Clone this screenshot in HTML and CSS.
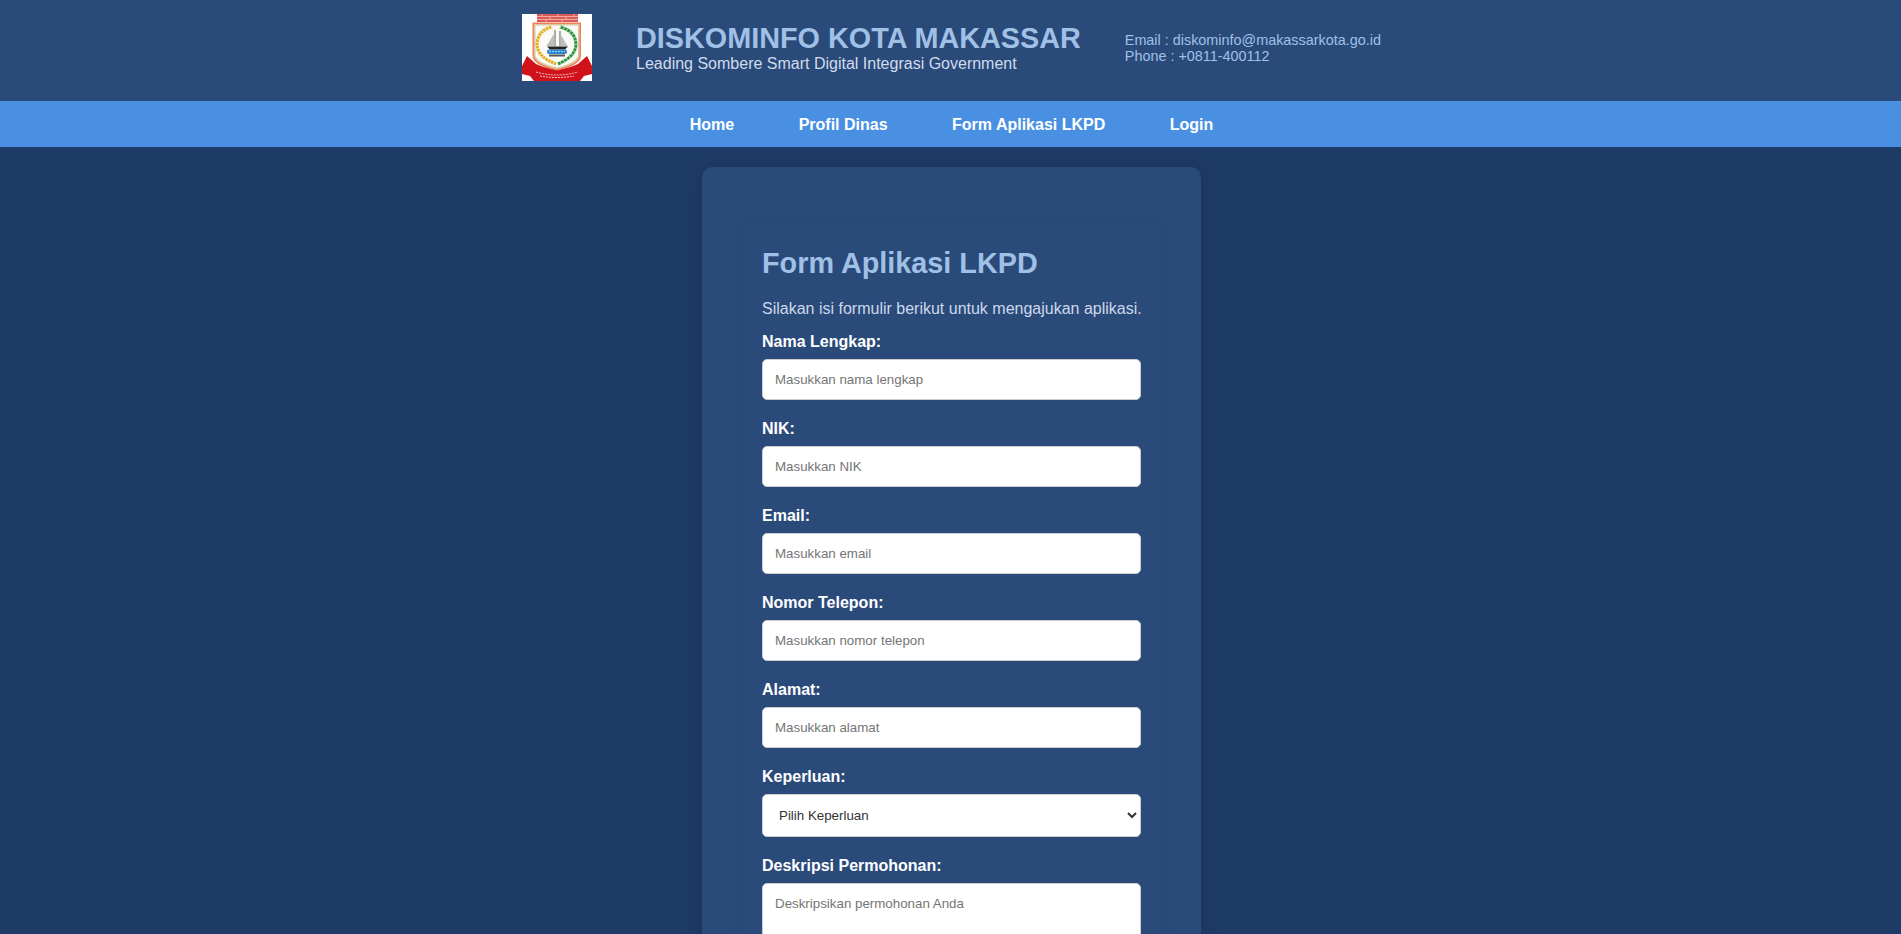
FILE: index.html
```html
<!DOCTYPE html>
<html lang="en">
<head>
    <meta charset="UTF-8">
    <meta name="viewport" content="width=device-width, initial-scale=1.0">
    <title>Form Aplikasi LKPD</title>
    <link rel="stylesheet" href="styles.css">
</head>
<body>
    <header class="site-header">
        <svg class="logo" viewBox="0 0 70 67" role="img" aria-label="Logo Kota Makassar">
            <rect width="70" height="67" fill="#fff"/>
            <!-- brick crown -->
            <rect x="15" y="0" width="41" height="8" fill="#dc5a56"/>
            <path d="M15 2.500h41M15 5.500h41M20 0v2.500M28 2.500v3M36 0v2.500M44 2.500v3M52 0v2.500M24 5.500v2.500M40 5.500v2.500" stroke="#f6cfcb" stroke-width="0.7" fill="none"/>
            <!-- ribbon -->
            <path d="M0 52l5-10l9 8q21 10 42 0l9-8l5 10v8l-8 2l-4 5h-46l-4-5l-8-2z" fill="#d0121b"/>
            <!-- shield -->
            <path d="M10.500 8.500h48.500v33q0 10-24 15q-24.500-5-24.500-15z" fill="#f1805f"/>
            <path d="M12 10h45.500v31q0 9-22.500 14q-23-5-23-14z" fill="#d9c9a0"/>
            <path d="M13.500 11.500h42.500v29q0 8-21 13q-21.500-5-21.500-13z" fill="#fafaf6"/>
            <!-- padi and leaves -->
            <path d="M30 13q-14 3-15 17q0 13 19 20" fill="none" stroke="#e3ad2a" stroke-width="3"/>
            <path d="M30 13q-14 3-15 17q0 13 19 20" fill="none" stroke="#fff3c8" stroke-width="3" stroke-dasharray="0.8 2.400"/>
            <path d="M38 13q16 4 16 18q-1 12-18 19" fill="none" stroke="#2f9440" stroke-width="3"/>
            <path d="M38 13q16 4 16 18q-1 12-18 19" fill="none" stroke="#bfe3c0" stroke-width="3" stroke-dasharray="0.8 2.800"/>
            <!-- boat -->
            <path d="M33 16v16M38 17v15" stroke="#333" stroke-width="0.8"/>
            <path d="M32.500 19l-8 13h8zM38.500 20l7 12h-7z" fill="#bdbdbd"/>
            <path d="M25 32.500h21l-3 3h-15z" fill="#222"/>
            <rect x="25" y="35.500" width="20" height="4.500" rx="2" fill="#2d84cc"/>
            <path d="M27 37.500h16" stroke="#cfe6f8" stroke-width="0.8" stroke-dasharray="2 1"/>
            <rect x="27" y="40.500" width="16" height="2" fill="#555"/>
            <!-- ribbon lettering band -->
            <path d="M14 58q21 6 42 0M18 62q17 3 34 0" fill="none" stroke="#f6c9c9" stroke-width="1" stroke-dasharray="2 1"/>
        </svg>
        <div class="brand">
            <h1>DISKOMINFO KOTA MAKASSAR</h1>
            <p>Leading Sombere Smart Digital Integrasi Government</p>
        </div>
        <div class="contact">
            <p>Email : diskominfo@makassarkota.go.id</p>
            <p>Phone : +0811-400112</p>
        </div>
    </header>

    <nav class="main-nav">
        <a href="#home">Home</a>
        <a href="#profil">Profil Dinas</a>
        <a href="#form">Form Aplikasi LKPD</a>
        <a href="#login">Login</a>
    </nav>

    <main class="card">
        <form class="form-box">
            <h2>Form Aplikasi LKPD</h2>
            <p class="intro">Silakan isi formulir berikut untuk mengajukan aplikasi.</p>

            <label for="nama">Nama Lengkap:</label>
            <input type="text" id="nama" placeholder="Masukkan nama lengkap">

            <label for="nik">NIK:</label>
            <input type="text" id="nik" placeholder="Masukkan NIK">

            <label for="email">Email:</label>
            <input type="email" id="email" placeholder="Masukkan email">

            <label for="telepon">Nomor Telepon:</label>
            <input type="text" id="telepon" placeholder="Masukkan nomor telepon">

            <label for="alamat">Alamat:</label>
            <input type="text" id="alamat" placeholder="Masukkan alamat">

            <label for="keperluan">Keperluan:</label>
            <select id="keperluan">
                <option>Pilih Keperluan</option>
            </select>

            <label for="deskripsi">Deskripsi Permohonan:</label>
            <textarea id="deskripsi" placeholder="Deskripsikan permohonan Anda"></textarea>
        </form>
    </main>
</body>
</html>
```

FILE: styles.css
```css
body {
    margin: 0;
    background-color: #1e3a66;
    font-family: "Liberation Sans", Arial, sans-serif;
    color: #fff;
}
.site-header {
    display: flex;
    justify-content: center;
    align-items: center;
    gap: 44px;
    height: 101px;
    padding: 0 0 6px 2px;
    box-sizing: border-box;
    background-color: #2a4a7a;
}
.logo {
    width: 70px;
    height: 67px;
}
.brand h1 {
    margin: 0 0 2px;
    font-size: 28.8px;
    line-height: 30px;
    color: #a0c0e6;
}
.brand p {
    margin: 0;
    font-size: 16px;
    line-height: 18px;
    color: #d0dcec;
}
.contact {
    font-size: 14.4px;
    line-height: 16px;
    color: #a0c0e6;
}
.contact p {
    margin: 0;
}
.main-nav {
    display: flex;
    justify-content: center;
    gap: 64.5px;
    padding: 15px 0 13px 2px;
    background-color: #4a90e2;
}
.main-nav a {
    font-size: 16px;
    line-height: 18px;
    font-weight: bold;
    color: #fff;
    text-decoration: none;
}
.card {
    width: 499px;
    box-sizing: border-box;
    margin: 20px 0 20px calc(50% - 248.5px);
    padding: 58px 40px 40px;
    background-color: #2a4a7a;
    border-radius: 10px;
    box-shadow: 0 0 20px rgba(0, 0, 0, 0.1);
}
.form-box {
    padding: 21px 20px 20px;
    border-radius: 10px;
    box-shadow: 0 0 15px rgba(0, 0, 0, 0.04);
}
.form-box h2 {
    margin: 0 0 16px;
    font-size: 28.8px;
    line-height: 34px;
    color: #a0c0e6;
}
.intro {
    margin: 0 0 7px;
    font-size: 16px;
    line-height: 26px;
    white-space: nowrap;
    color: #ccd8ea;
}
label {
    display: block;
    margin-bottom: 4px;
    font-size: 16px;
    line-height: 26px;
    font-weight: bold;
}
input,
select,
textarea {
    display: block;
    width: 100%;
    box-sizing: border-box;
    margin-bottom: 16px;
    padding: 12px;
    border: 1px solid #ccc;
    border-radius: 5px;
    background-color: #fff;
    font-family: "Liberation Sans", Arial, sans-serif;
    font-size: 13.33px;
}
input {
    height: 41px;
}
select {
    height: 43px;
    color: #333;
}
textarea {
    height: 120px;
}
```
